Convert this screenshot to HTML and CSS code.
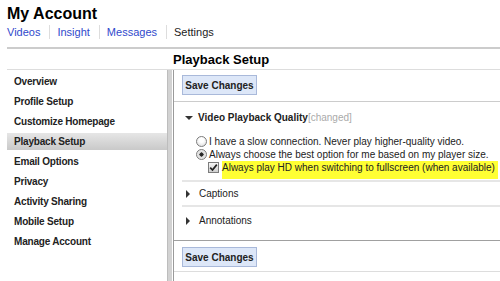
FILE: index.html
```html
<!DOCTYPE html>
<html lang="en">
<head>
  <meta charset="UTF-8" />
  <title>My Account - Settings</title>
  <link rel="stylesheet" href="styles.css">
</head>
<body>

  <div class="page">
    <h1>My Account</h1>
    <div class="tabs">
      <a href="#">Videos</a>
      <a href="#">Insight</a>
      <a href="#">Messages</a>
      <span class="current">Settings</span>
    </div>

    <div class="subhead">
      <h2>Playback Setup</h2>
    </div>

    <div class="layout">
      <!-- left menu -->
      <ul class="menu">
        <li>Overview</li>
        <li>Profile Setup</li>
        <li>Customize Homepage</li>
        <li class="active">Playback Setup</li>
        <li>Email Options</li>
        <li>Privacy</li>
        <li>Activity Sharing</li>
        <li>Mobile Setup</li>
        <li>Manage Account</li>
      </ul>

      <div class="divider"></div>

      <div class="main">
        <div class="toolbar">
          <button>Save Changes</button>
        </div>

        <div class="sections">
          <div class="section first">
            <div class="section-title open">
              <span class="arrow down"></span>
              <b>Video Playback Quality</b><span class="changed">[changed]</span>
            </div>
            <div class="option">
              <span class="radio"></span>
              <span>I have a slow connection. Never play higher-quality video.</span>
            </div>
            <div class="option">
              <span class="radio on"></span>
              <span>Always choose the best option for me based on my player size.</span>
            </div>
            <div class="option sub">
              <span class="check">
                <svg width="9" height="9" viewBox="0 0 9 9"><path d="M1.2 4.6 L3.5 7 L7.8 1.6" fill="none" stroke="#222" stroke-width="1.7"/></svg>
              </span>
              <span class="highlight">Always play HD when switching to fullscreen (when available)</span>
            </div>
          </div>

          <div class="section second">
            <div class="section-title">
              <span class="arrow right"></span>
              <span>Captions</span>
            </div>
          </div>

          <div class="section third">
            <div class="section-title">
              <span class="arrow right"></span>
              <span>Annotations</span>
            </div>
          </div>
        </div>

        <div class="toolbar bottom">
          <button>Save Changes</button>
        </div>
      </div>
    </div>
  </div>

</body>
</html>
```

FILE: styles.css
```css
* {
  margin: 0;
  padding: 0;
  box-sizing: border-box;
}

body {
  font-family: 'Liberation Sans', Arial, sans-serif;
  font-size: 10px;
  color: #222;
  background: #fff;
  overflow: hidden;
}

.page {
  padding: 4px 0 0 7px;
}

h1 {
  font-size: 16px;
  line-height: 20px;
  font-weight: 700;
  color: #000;
}

.tabs {
  display: flex;
  margin-top: 1px;
  font-size: 11px;
  line-height: 14px;
  padding-bottom: 8px;
  border-bottom: 2px solid #ccc;
}

.tabs a,
.tabs span {
  padding: 0 9px 0 7px;
  border-left: 1px solid #ddd;
  text-decoration: none;
}

.tabs a:first-child {
  padding-left: 0;
  border-left: none;
}

.tabs a {
  color: #3049cc;
}

.tabs .current {
  color: #222;
}

.subhead {
  padding: 2px 0 0 166px;
  height: 21px;
  border-bottom: 1px solid #ddd;
}

h2 {
  font-size: 13px;
  line-height: 18px;
  font-weight: 700;
  color: #000;
}

.layout {
  display: grid;
  grid-template-columns: 160px 6px 1fr;
  min-height: 220px;
}

/* left menu */
.menu {
  list-style: none;
  padding-top: 3px;
}

.menu li {
  height: 17px;
  line-height: 17px;
  margin-bottom: 3px;
  padding-left: 7px;
  font-weight: 700;
  letter-spacing: -0.2px;
}

.menu li.active {
  background: linear-gradient(#e6e6e6, #c9c9c9);
}

.divider {
  background: #d2d2d2;
  border-left: 1px solid #bdbdbd;
  border-right: 1px solid #fff;
}

.main {
  border-left: 1px solid #9a9a9a;
}

.toolbar {
  padding: 5px 0 6px 8px;
  border-bottom: 1px solid #ccc;
}

.toolbar.bottom {
  padding-top: 6px;
  padding-bottom: 4px;
  border-bottom-color: #ddd;
}

button {
  font-family: 'Liberation Sans', Arial, sans-serif;
  font-size: 10px;
  font-weight: 700;
  color: #222;
  height: 20px;
  width: 75px;
  background: #dde7f8;
  border: 1px solid #a9b9da;
}

.sections {
  border-bottom: 1px solid #a0a0a0;
}

.section {
  margin-left: 8px;
  border-bottom: 2px solid #e6e6e6;
}

.section.first {
  padding: 9px 0 1px;
}

.section.second {
  padding: 5px 0 5px;
}

.section.third {
  padding: 7px 0 13px;
  border-bottom: none;
}

.section-title {
  display: flex;
  align-items: center;
  line-height: 13px;
  padding-left: 3px;
}

.section-title b {
  font-weight: 700;
}

.changed {
  color: #aaa;
}

.arrow {
  width: 0;
  height: 0;
  margin-right: 7px;
}

.arrow.down {
  border-left: 4px solid transparent;
  border-right: 4px solid transparent;
  border-top: 4px solid #333;
  margin-right: 5px;
}

.arrow.right {
  border-top: 4px solid transparent;
  border-bottom: 4px solid transparent;
  border-left: 4px solid #333;
  margin-left: 1px;
  margin-right: 9px;
}

.section.first .section-title {
  margin-bottom: 11px;
}

.option {
  display: flex;
  align-items: flex-start;
  line-height: 13px;
  padding-left: 14px;
}

.option.sub {
  padding-left: 26px;
}

.radio {
  width: 11px;
  height: 11px;
  margin: 1px 2px 0 0;
  border-radius: 50%;
  border: 1px solid #7c7c7c;
  background: radial-gradient(circle at 50% 35%, #fff 30%, #d6d6d6 100%);
}

.radio.on {
  background: radial-gradient(circle, #222 0, #333 30%, #ddd 36%, #f4f4f4 100%);
}

.check {
  display: flex;
  align-items: center;
  justify-content: center;
  width: 11px;
  height: 11px;
  margin: 1px 3px 0 0;
  border: 1px solid #7c7c7c;
  background: linear-gradient(#f6f6f6, #cfcfcf);
}

.highlight {
  background: #ffff33;
  padding: 0 3px 5px 0;
}
```
